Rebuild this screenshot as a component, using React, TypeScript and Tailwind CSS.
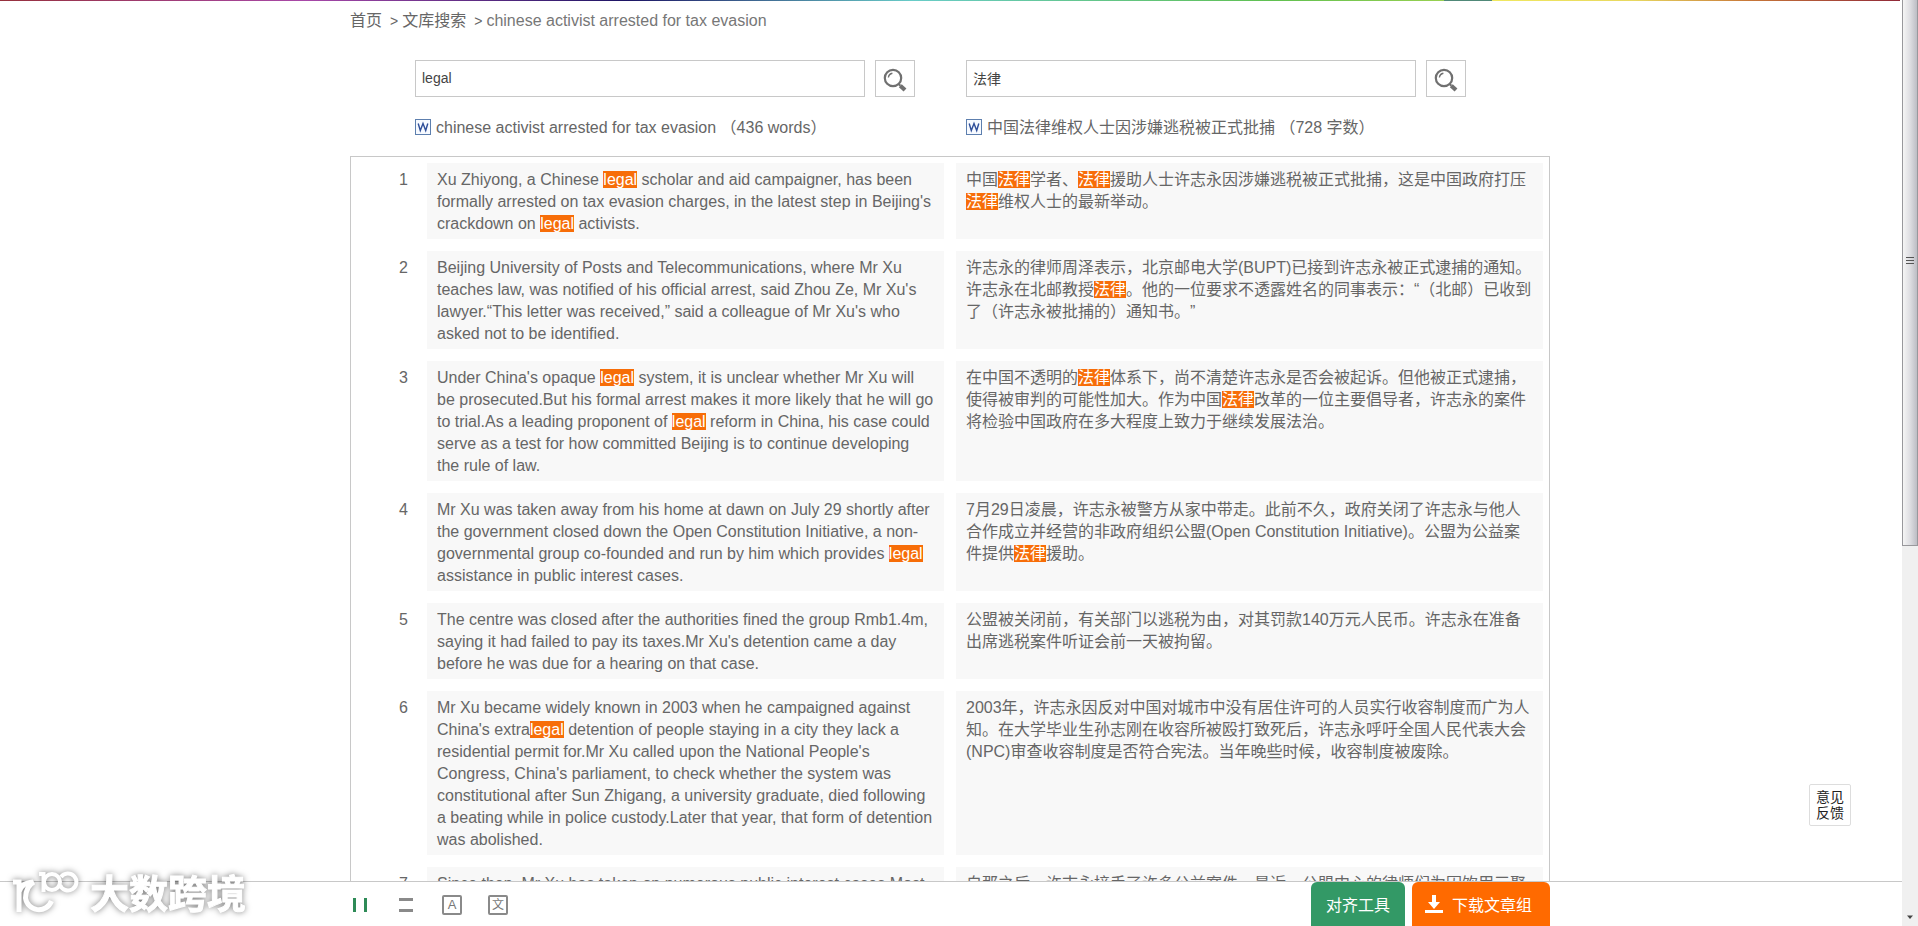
import React, { useState } from "react";

const HIT = /(legal|法律)/g;

const rows: { en: string; zh: string }[] = [
  {
    en: "Xu Zhiyong, a Chinese legal scholar and aid campaigner, has been formally arrested on tax evasion charges, in the latest step in Beijing's crackdown on legal activists.",
    zh: "中国法律学者、法律援助人士许志永因涉嫌逃税被正式批捕，这是中国政府打压法律维权人士的最新举动。",
  },
  {
    en: "Beijing University of Posts and Telecommunications, where Mr Xu teaches law, was notified of his official arrest, said Zhou Ze, Mr Xu's lawyer.“This letter was received,” said a colleague of Mr Xu's who asked not to be identified.",
    zh: "许志永的律师周泽表示，北京邮电大学(BUPT)已接到许志永被正式逮捕的通知。许志永在北邮教授法律。他的一位要求不透露姓名的同事表示：“（北邮）已收到了（许志永被批捕的）通知书。”",
  },
  {
    en: "Under China's opaque legal system, it is unclear whether Mr Xu will be prosecuted.But his formal arrest makes it more likely that he will go to trial.As a leading proponent of legal reform in China, his case could serve as a test for how committed Beijing is to continue developing the rule of law.",
    zh: "在中国不透明的法律体系下，尚不清楚许志永是否会被起诉。但他被正式逮捕，使得被审判的可能性加大。作为中国法律改革的一位主要倡导者，许志永的案件将检验中国政府在多大程度上致力于继续发展法治。",
  },
  {
    en: "Mr Xu was taken away from his home at dawn on July 29 shortly after the government closed down the Open Constitution Initiative, a non-governmental group co-founded and run by him which provides legal assistance in public interest cases.",
    zh: "7月29日凌晨，许志永被警方从家中带走。此前不久，政府关闭了许志永与他人合作成立并经营的非政府组织公盟(Open Constitution Initiative)。公盟为公益案件提供法律援助。",
  },
  {
    en: "The centre was closed after the authorities fined the group Rmb1.4m, saying it had failed to pay its taxes.Mr Xu's detention came a day before he was due for a hearing on that case.",
    zh: "公盟被关闭前，有关部门以逃税为由，对其罚款140万元人民币。许志永在准备出席逃税案件听证会前一天被拘留。",
  },
  {
    en: "Mr Xu became widely known in 2003 when he campaigned against China's extralegal detention of people staying in a city they lack a residential permit for.Mr Xu called upon the National People's Congress, China's parliament, to check whether the system was constitutional after Sun Zhigang, a university graduate, died following a beating while in police custody.Later that year, that form of detention was abolished.",
    zh: "2003年，许志永因反对中国对城市中没有居住许可的人员实行收容制度而广为人知。在大学毕业生孙志刚在收容所被殴打致死后，许志永呼吁全国人民代表大会(NPC)审查收容制度是否符合宪法。当年晚些时候，收容制度被废除。",
  },
  {
    en: "Since then, Mr Xu has taken on numerous public interest cases.Most",
    zh: "自那之后，许志永接手了许多公益案件。最近，公盟中心的律师们为因饮用三聚",
  },
];

function Marked({ text }: { text: string }) {
  return (
    <>
      {text.split(HIT).map((part, i) =>
        i % 2 === 1 ? (
          <mark key={i} className="bg-[#f76d08] text-white">
            {part}
          </mark>
        ) : (
          <React.Fragment key={i}>{part}</React.Fragment>
        ),
      )}
    </>
  );
}

function SearchBox({ label, initial }: { label: string; initial: string }) {
  const [value, setValue] = useState(initial);
  return (
    <form className="flex gap-2.5" onSubmit={(e) => e.preventDefault()}>
      <input
        aria-label={label}
        value={value}
        onChange={(e) => setValue(e.target.value)}
        className="h-[37px] w-[450px] border border-[#c8c8c8] px-1.5 pb-0.5 text-sm text-[#444] outline-none"
      />
      <button aria-label="搜索" className="flex h-[37px] w-10 items-center justify-center border border-[#c8c8c8] pt-0.5">
        <svg width="24" height="24" viewBox="0 0 24 24" fill="none" stroke="#707070">
          <circle cx="10" cy="10" r="8.200" strokeWidth="2.200" />
          <path d="M5.400 9.500a5 5 0 0 1 4-4.300" strokeWidth="1.400" />
          <path d="M15.600 16l1.800 1.800" strokeWidth="2" />
          <path d="M17.300 17.700l4.700 4.300" strokeWidth="4.200" />
        </svg>
      </button>
    </form>
  );
}

function DocTitle({ children }: { children: React.ReactNode }) {
  return (
    <h2 className="mt-[18px] flex h-6 items-center gap-1 whitespace-pre">
      <svg width="17" height="17" viewBox="0 0 17 17" fill="none">
        <rect x="0.500" y="0.500" width="15" height="15" fill="#f7faff" stroke="#5d7fae" />
        <path d="M3.200 4.500l2.100 7 2.700-7 2.700 7 2.100-7" stroke="#2f4f9a" strokeWidth="1.400" />
      </svg>
      <span className="pt-0.5">{children}</span>
    </h2>
  );
}

function Scrollbar() {
  return (
    <div aria-hidden="true" className="fixed inset-y-0 right-0 z-20 w-4 bg-[#f0f0f0]">
      <div className="flex h-[59%] items-center justify-center border-x border-b border-[#98989c] bg-linear-to-r from-[#f5f5f5] via-[#dedee2] to-[#bdbdc4] pb-6">
        <div className="flex w-2 flex-col gap-0.5">
          <i className="h-px bg-[#555]" />
          <i className="h-px bg-[#555]" />
          <i className="h-px bg-[#555]" />
        </div>
      </div>
      <svg className="absolute bottom-1.5 left-1" width="8" height="5" viewBox="0 0 8 5">
        <path d="M1 0.500h6l-3 3.500z" fill="#444" />
      </svg>
    </div>
  );
}

function Watermark() {
  return (
    <div className="pointer-events-none absolute top-[-17px] left-3 flex items-end gap-2 drop-shadow-[0_0_3px_rgba(0,0,0,0.5)]">
      <svg width="70" height="52" viewBox="0 0 70 52" fill="none" stroke="#fff" strokeWidth="5">
        <path d="M1 17h6v30M7 27q2-9 14-10" />
        <path d="M22 17q-8 4-8.500 16a13.500 13.500 0 0 0 26 3" />
        <path d="M27 9h4.500v18" strokeWidth="4" />
        <circle cx="40" cy="17" r="8" strokeWidth="4" />
        <path d="M48 20a8.500 8.500 0 1 0 1-8" strokeWidth="4" />
      </svg>
      <span className="text-[39px] leading-[44px] font-bold text-white [-webkit-text-stroke:1px_white]">大数跨境</span>
    </div>
  );
}

export default function App() {
  return (
    <div className="h-screen overflow-hidden bg-white pr-[18px] font-['Liberation_Sans','Noto_Sans_CJK_SC',sans-serif] text-base leading-[22px] text-[#666] [text-spacing-trim:space-all]">
      <div className="h-px bg-[linear-gradient(to_right,#96303c_0%,#a848a8_16%,#1c1464_33%,#68ccc8_48%,#60c050_67%,#98d050_76%,#508878_76%,#508878_78.500%,#f0e860_78.500%,#e8d860_86%,#c87838_92%,#902838_100%)]" />

      <main className="mx-auto w-[1200px]">
        <nav aria-label="路径" className="flex h-10 items-center">
          <a href="#home">首页</a>
          <span className="mr-1 ml-2 text-sm">&gt;</span>
          <a href="#search">文库搜索</a>
          <span className="mr-1 ml-2 text-sm">&gt;</span>
          <span className="text-[#777]">chinese activist arrested for tax evasion</span>
        </nav>

        <div className="mt-[19px] flex gap-[51px] pl-[65px]">
          <section className="w-[500px]">
            <SearchBox label="英文搜索" initial="legal" />
            <DocTitle>chinese activist arrested for tax evasion （436 words）</DocTitle>
          </section>
          <section className="w-[500px]">
            <SearchBox label="中文搜索" initial="法律" />
            <DocTitle>中国法律维权人士因涉嫌逃税被正式批捕 （728 字数）</DocTitle>
          </section>
        </div>

        <ol className="mt-[17px] flex flex-col gap-3 border border-[#c8c8c8] py-1.5 pr-1.5">
          {rows.map((row, i) => (
            <li key={i} className="flex gap-3">
              <span className="w-16 pt-1.5 pb-1 pl-12">{i + 1}</span>
              <p className="w-[517px] bg-[#f8f8f8] px-2.5 pt-1.5 pb-1">
                <Marked text={row.en} />
              </p>
              <p lang="zh-CN" className="flex-1 bg-[#f8f8f8] pt-1.5 pr-2 pb-1 pl-2.5">
                <Marked text={row.zh} />
              </p>
            </li>
          ))}
        </ol>
      </main>

      <button className="fixed right-[67px] bottom-[100px] h-[42px] w-[42px] rounded-xs border border-[#ddd] bg-white text-sm leading-4 text-[#222]">
        意见反馈
      </button>

      <footer className="fixed inset-x-0 bottom-0 z-10 h-[45px] border-t border-[#c8c8c8] bg-white pr-[18px]">
        <Watermark />
        <div className="mx-auto flex h-11 w-[1200px] items-center">
          <div className="flex gap-[26px] pt-0.5">
            <button aria-label="左右对照">
              <svg width="20" height="20" viewBox="0 0 20 20" fill="#2e8b57">
                <path d="M3 3h3v14H3zM14 3h3v14h-3z" />
              </svg>
            </button>
            <button aria-label="上下对照">
              <svg width="20" height="20" viewBox="0 0 20 20" fill="#8a8a8a">
                <path d="M3 3h14v3H3zM3 14h14v3H3z" />
              </svg>
            </button>
            <button className="flex h-5 w-5 items-center justify-center rounded-xs border-2 border-[#8a8a8a] text-[13px] leading-4 text-[#777]">
              A
            </button>
            <button className="flex h-5 w-5 items-center justify-center rounded-xs border-2 border-[#8a8a8a] text-xs leading-4 text-[#777]">
              文
            </button>
          </div>
          <div className="ml-auto flex h-11 gap-[7px] text-white">
            <button className="w-[94px] rounded-t-md bg-[#339966] pt-1">对齐工具</button>
            <button className="flex w-[138px] items-center gap-2 rounded-t-md bg-[#ff6a00] pt-1 pl-3">
              <svg className="mb-1" width="20" height="20" viewBox="0 0 20 20" fill="#fff">
                <path d="M8 1h4v7h4l-6 7-6-7h4z" />
                <path d="M1 16h18v3H1z" />
              </svg>
              下载文章组
            </button>
          </div>
        </div>
      </footer>
      <Scrollbar />
    </div>
  );
}
